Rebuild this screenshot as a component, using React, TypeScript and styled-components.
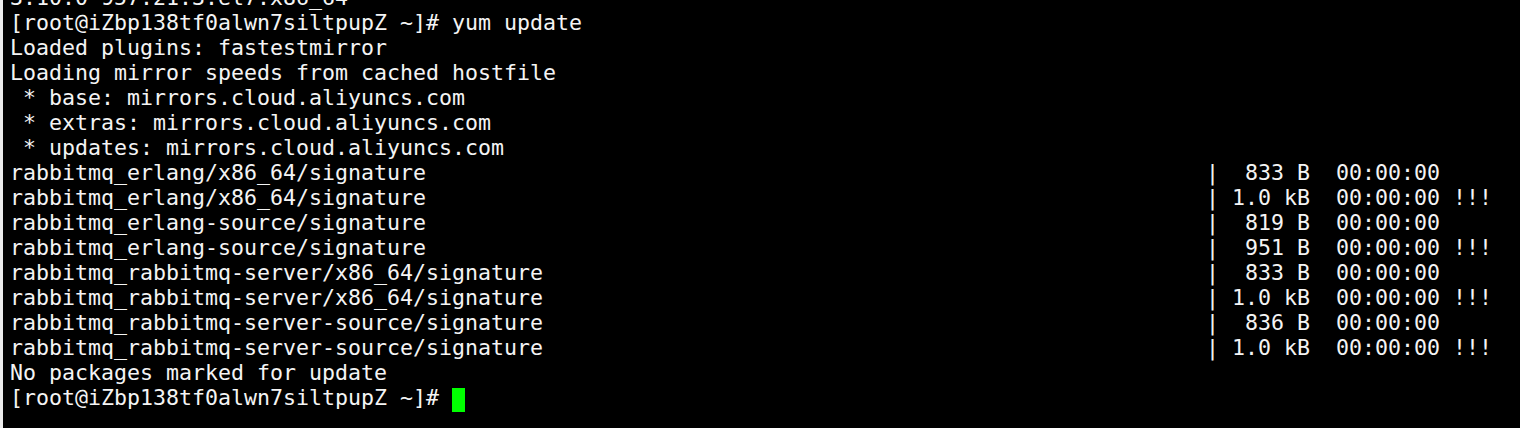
import React from "react";
import styled, { createGlobalStyle } from "styled-components";

const Global = createGlobalStyle`
  html, body { margin: 0; padding: 0; background: #000; }
  body { width: 1520px; height: 428px; overflow: hidden; }
`;

const Screen = styled.div`
  width: 1520px;
  height: 428px;
  background: #000;
  border-left: 3px solid #ececec;
  box-sizing: border-box;
  padding-left: 7px;
  overflow: hidden;
`;

const Output = styled.div`
  margin-top: -15px;
  font-family: "DejaVu Sans Mono", "Liberation Mono", monospace;
  font-size: 21.6px;
  color: #f4f4f4;
`;

const Line = styled.div`
  height: 25px;
  line-height: 25px;
  white-space: pre;
`;

const Cursor = styled.span`
  display: inline-block;
  width: 13px;
  height: 24px;
  background: #00ff00;
  vertical-align: -7px;
`;

const PROMPT = "[root@iZbp138tf0alwn7siltpupZ ~]# ";

const rows: { name: string; size: string; warn?: boolean }[] = [
  { name: "rabbitmq_erlang/x86_64/signature", size: "833 B" },
  { name: "rabbitmq_erlang/x86_64/signature", size: "1.0 kB", warn: true },
  { name: "rabbitmq_erlang-source/signature", size: "819 B" },
  { name: "rabbitmq_erlang-source/signature", size: "951 B", warn: true },
  { name: "rabbitmq_rabbitmq-server/x86_64/signature", size: "833 B" },
  { name: "rabbitmq_rabbitmq-server/x86_64/signature", size: "1.0 kB", warn: true },
  { name: "rabbitmq_rabbitmq-server-source/signature", size: "836 B" },
  { name: "rabbitmq_rabbitmq-server-source/signature", size: "1.0 kB", warn: true },
];

const fmt = (r: { name: string; size: string; warn?: boolean }) =>
  r.name.padEnd(92) + "| " + r.size.padStart(6) + "  00:00:00" + (r.warn ? " !!!" : "");

export default function App() {
  const lines = [
    "3.10.0-957.21.3.el7.x86_64",
    PROMPT + "yum update",
    "Loaded plugins: fastestmirror",
    "Loading mirror speeds from cached hostfile",
    " * base: mirrors.cloud.aliyuncs.com",
    " * extras: mirrors.cloud.aliyuncs.com",
    " * updates: mirrors.cloud.aliyuncs.com",
    ...rows.map(fmt),
    "No packages marked for update",
  ];
  return (
    <>
      <Global />
      <Screen>
        <Output>
          {lines.map((l, i) => (
            <Line key={i}>{l}</Line>
          ))}
          <Line>
            {PROMPT}
            <Cursor />
          </Line>
        </Output>
      </Screen>
    </>
  );
}
